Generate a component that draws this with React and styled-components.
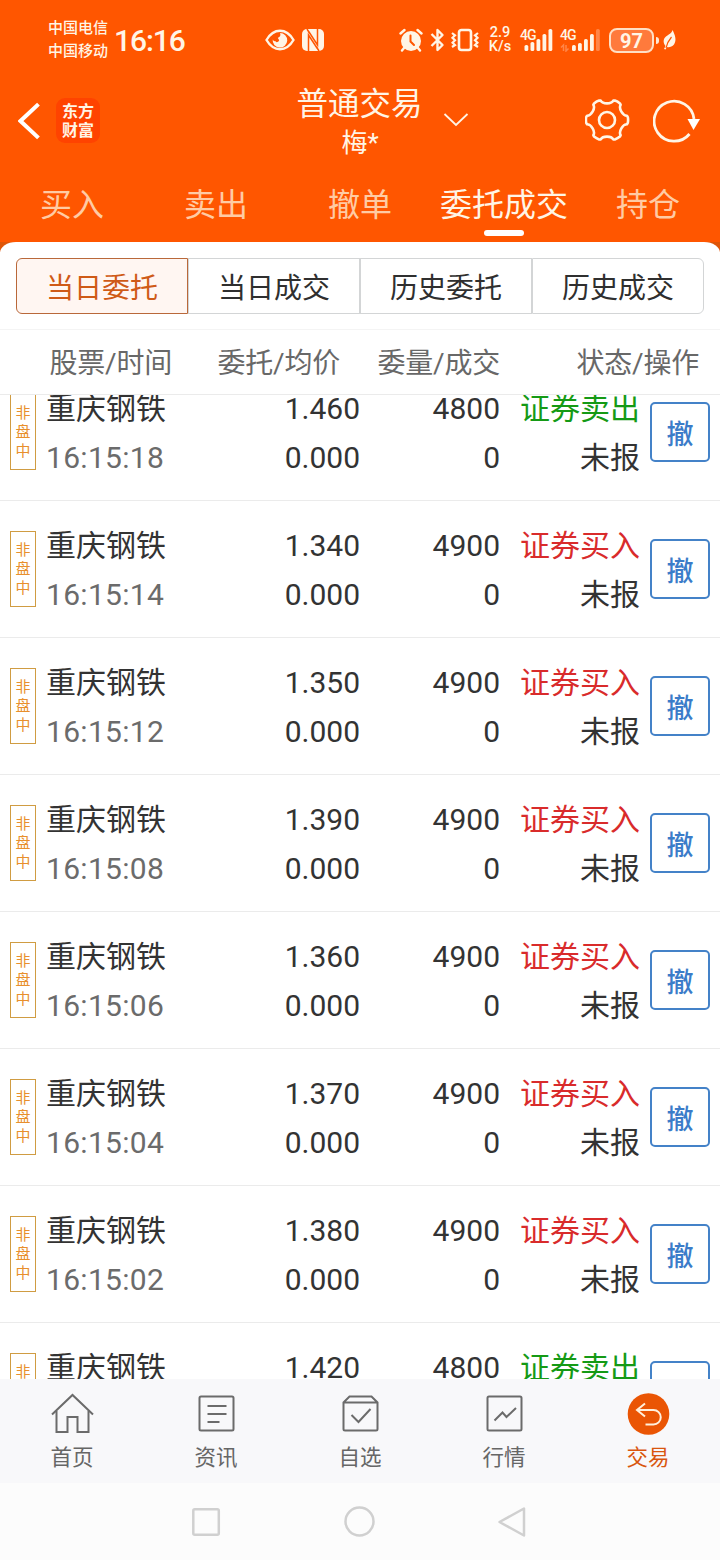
import styled, { createGlobalStyle } from 'styled-components';

const GlobalStyle = createGlobalStyle`
    * { box-sizing: border-box; }
    body {
        margin: 0;
        background: #fff;
        font-family: Roboto, "Noto Sans CJK SC", sans-serif;
        color: #333;
    }
`;

const Page = styled.div`
    width: 720px;
    height: 1560px;
    display: flex;
    flex-direction: column;
    overflow: hidden;
`;

// Header
const Header = styled.header`
    height: 242px;
    flex: none;
    background: #ff5600;
    color: #fff5e6;
    display: flex;
    flex-direction: column;
`;

const StatusBar = styled.div`
    height: 80px;
    display: flex;
    align-items: center;
    padding-left: 48px;

    svg { display: block; flex: none; }
`;

const Carriers = styled.div`
    width: 62px;
    font-size: 15px;
    font-weight: 500;
    line-height: 23px;
    white-space: nowrap;
`;

const Clock = styled.div`
    width: 151px;
    margin-left: 4px;
    font-size: 30px;
    font-weight: 500;
    line-height: 36px;
    letter-spacing: -1.1px;
    padding-top: 1px;
`;

const StatusItem = styled.div`
    flex: none;
    width: ${props => props.$width}px;
    margin-right: ${props => props.$gap || 0}px;
`;

const Speed = styled.div`
    width: 26px;
    margin-right: 7px;
    font-size: 14.5px;
    font-weight: 500;
    line-height: 14px;
    text-align: center;
    white-space: nowrap;
`;

const SignalBox = styled.div`
    position: relative;
    width: ${props => props.$width}px;
    height: 24px;
    margin-right: ${props => props.$gap}px;
`;

const Network = styled.span`
    position: absolute;
    left: 0;
    top: 0;
    font-size: 14px;
    font-weight: 500;
    line-height: 14px;
    letter-spacing: -1px;
`;

const Battery = styled.div`
    width: 45px;
    height: 25px;
    border: 2px solid #ffdfc4;
    border-radius: 8px;
    background: #ff7a3c;
    font-size: 20px;
    font-weight: 700;
    line-height: 22px;
    text-align: center;
`;

const BatteryTip = styled.div`
    width: 3px;
    height: 7px;
    margin: 0 4px 0 2px;
    border-radius: 0 3px 3px 0;
    background: #ffe9d6;
`;

const TitleBar = styled.div`
    height: 86px;
    display: flex;
    align-items: flex-start;

    svg { display: block; flex: none; }
`;

const BackButton = styled.div`
    width: 56px;
    padding: 22px 0 0 18px;
`;

const Logo = styled.div`
    width: 44px;
    height: 45px;
    margin: 18px 196px 0 0;
    padding-top: 3px;
    border-radius: 9px;
    background: #ff4300;
    font-family: "Noto Sans CJK SC", sans-serif;
    font-size: 16px;
    font-weight: 700;
    line-height: 19px;
    text-align: center;
`;

const Title = styled.div`
    width: 127px;
    text-align: center;
    white-space: nowrap;
`;

const TitleText = styled.div`
    font-size: 31.5px;
    line-height: 44px;
    margin-top: 3px;
`;

const Account = styled.div`
    padding-left: 1px;
    font-size: 26px;
    line-height: 32px;
`;

const Chevron = styled.div`
    width: 162px;
    padding: 32px 0 0 20px;
`;

const ToolButton = styled.div`
    width: ${props => props.$width}px;
    padding-top: 17px;
`;

const Tabs = styled.nav`
    display: grid;
    grid-template-columns: repeat(5, 1fr);
    height: 76px;
`;

const Tab = styled.div`
    display: flex;
    flex-direction: column;
    align-items: center;
    padding-top: 15px;
    font-size: 32px;
    line-height: 48px;
    white-space: nowrap;
    color: ${props => props.$active ? '#fff5e6' : '#ffcba4'};

    &::after {
        content: "";
        width: 40px;
        height: 6px;
        margin-top: 1px;
        border-radius: 3px;
        background: ${props => props.$active ? '#fff' : 'transparent'};
    }
`;

// Order list
const PanelBack = styled.div`
    flex: none;
    background: linear-gradient(#de5508 10px, #fff 10px);
`;

const Panel = styled.div`
    background: #fff;
    border-radius: 16px 16px 0 0 / 11px 11px 0 0;
`;

const Segments = styled.div`
    display: grid;
    grid-template-columns: repeat(4, 1fr);
    height: 88px;
    padding: 16px 16px;
    border-bottom: 1px solid #f4f4f4;
`;

const Segment = styled.div`
    height: 56px;
    border: 1px solid ${props => props.$active ? '#b9683a' : '#d3d5d6'};
    background: ${props => props.$active ? '#fff6f2' : '#fff'};
    color: ${props => props.$active ? '#cf5a17' : '#2f2f2f'};
    font-size: 28px;
    line-height: 54px;
    padding-top: 3px;
    text-align: center;

    &:first-child { border-radius: 6px 0 0 6px; }
    &:last-child { border-radius: 0 6px 6px 0; }
`;

const Columns = styled.div`
    display: grid;
    grid-template-columns: 172px 168px 160px 199px;
    height: 65px;
    padding-top: 3px;
    border-bottom: 1px solid #ebebeb;
    color: #686868;
    font-size: 28px;
    line-height: 62px;
    letter-spacing: -0.2px;
    text-align: right;
    white-space: nowrap;
`;

const List = styled.div`
    height: 984px;
    flex: none;
    overflow: hidden;
`;

const Row = styled.div`
    display: grid;
    grid-template-columns: 26px 194px 130px 140px 140px 70px;
    height: 137px;
    padding: 20px 10px 18px;
    border-bottom: 1px solid #ebebeb;
    font-size: 30px;
    line-height: 49px;

    &:first-child { margin-top: -31px; }
`;

const Tag = styled.div`
    display: flex;
    align-items: center;
    justify-content: center;
    height: 76px;
    margin-top: 10px;
    border: 1px solid #d09c42;
    color: #e88f2c;
    font-size: 15px;
    line-height: 19px;
    text-align: center;
`;

const TagText = styled.div`
    width: 15px;
    padding-top: 1px;
    word-break: break-all;
`;

const Cell = styled.div`
    padding-left: ${props => props.$left ? '10px' : 0};
    text-align: ${props => props.$left ? 'left' : 'right'};
    white-space: nowrap;
`;

const Time = styled.div`
    color: #6b6b6b;
    letter-spacing: 0.3px;
`;

const Side = styled.div`
    color: ${props => props.$sell ? '#159a15' : '#d92b2b'};
`;

const CancelButton = styled.div`
    width: 60px;
    height: 60px;
    margin: 18px 0 0 10px;
    padding-top: 3px;
    border: 2px solid #4482c8;
    border-radius: 5px;
    color: #3b7cc9;
    font-size: 27px;
    font-weight: 500;
    line-height: 56px;
    text-align: center;
`;

// Bottom bars
const BottomTabs = styled.nav`
    flex: none;
    display: grid;
    grid-template-columns: repeat(5, 1fr);
    height: 104px;
    background: #f8f8fa;
`;

const BottomTab = styled.div`
    display: flex;
    flex-direction: column;
    align-items: center;
    padding-top: 14px;
    color: ${props => props.$active ? '#d9560f' : '#666'};
    font-size: 21.5px;
    line-height: 32px;

    svg {
        display: block;
        margin-bottom: 6px;
    }
`;

const SystemNav = styled.div`
    flex: 1;
    display: flex;
    align-items: center;
    justify-content: center;
    gap: 122px;
    padding-right: 2px;
    background: #fcfcfc;
`;

const columns = ['股票/时间', '委托/均价', '委量/成交', '状态/操作'];

const orders = [
    { time: '16:15:18', price: '1.460', amount: 4800, sell: true },
    { time: '16:15:14', price: '1.340', amount: 4900 },
    { time: '16:15:12', price: '1.350', amount: 4900 },
    { time: '16:15:08', price: '1.390', amount: 4900 },
    { time: '16:15:06', price: '1.360', amount: 4900 },
    { time: '16:15:04', price: '1.370', amount: 4900 },
    { time: '16:15:02', price: '1.380', amount: 4900 },
    { time: '16:15:00', price: '1.420', amount: 4800, sell: true },
];

const polar = (radius, deg) => {
    const a = deg * Math.PI / 180;
    return `${(22 + radius * Math.cos(a)).toFixed(2)} ${(23 + radius * Math.sin(a)).toFixed(2)}`;
};

// six lobes with a scallop between each pair
const gearPath = [0, 60, 120, 180, 240, 300].map((d, i) =>
    `${i ? 'L' : 'M'}${polar(21, d - 8)}Q${polar(21.4, d)} ${polar(21, d + 8)}L${polar(20.4, d + 12)}C${polar(16.2, d + 15)} ${polar(16.2, d + 45)} ${polar(20.4, d + 48)}`
).join('') + 'Z';

const EyeIcon = () => (
    <svg width="30" height="22" viewBox="0 0 30 22" fill="none">
        <path d="M1.500 11C5 5 9.500 1.800 15 1.800S25 5 28.500 11C25 17 20.500 20.200 15 20.200S5 17 1.500 11Z" stroke="#fff5e6" strokeWidth="2.400" />
        <path d="M15 4A7.300 7.300 0 1 1 7.700 10.500C8.500 12 9.500 12.500 10.500 12C10.500 13.500 13 13.500 13.800 12C15 10.500 12.500 10 13 8.500C15 8.500 16 6 15 4Z" fill="#fff5e6" />
    </svg>
);

const NfcIcon = () => (
    <svg width="22" height="22" viewBox="0 0 22 22">
        <rect width="22" height="22" rx="5" fill="#fff5e6" />
        <path d="M6.500 23V6L15 19M15.500 -1V16L7 3" fill="none" stroke="#ff5600" strokeWidth="1.500" />
        <path d="M5 0L7.500 4M17 22L14.500 18" fill="none" stroke="#ff5600" strokeWidth="1.500" />
    </svg>
);

const AlarmIcon = () => (
    <svg width="24" height="24" viewBox="0 0 24 24" fill="none" stroke="#fff5e6" strokeLinecap="round">
        <circle cx="12" cy="13" r="10" fill="#fff5e6" stroke="none" />
        <path d="M1.500 5.500L5.500 2M22.500 5.500L18.500 2" strokeWidth="2.400" />
        <path d="M5 20L3 22.500M19 20L21 22.500" strokeWidth="2.400" />
        <path d="M11.500 7.500V13.500L15 17" stroke="#ff5600" strokeWidth="2" />
    </svg>
);

const BluetoothIcon = () => (
    <svg width="15" height="24" viewBox="0 0 15 24" fill="none" stroke="#fff5e6" strokeWidth="2.400" strokeLinejoin="round">
        <path d="M1.500 6L12.500 17L7.500 22V2L12.500 7L1.500 18" />
    </svg>
);

const VibrateIcon = () => (
    <svg width="28" height="24" viewBox="0 0 28 24" fill="none" stroke="#fff5e6">
        <rect x="8" y="2" width="12" height="20" rx="2.500" strokeWidth="2.600" />
        <path d="M1 5L4 7.300L1.500 9.800L4 12.200L1.500 14.700L4 17L1 19M27 5L24 7.300L26.500 9.800L24 12.200L26.500 14.700L24 17L27 19" strokeWidth="2.200" />
    </svg>
);

const Signal = ({ left, width, gap, weak }) => (
    <SignalBox $width={width} $gap={gap}>
        <svg width={width} height="24" viewBox={`0 0 ${width} 24`} fill="#fff5e6">
            {(weak ? [6, 8, 12, 17, 22] : [6, 9, 12, 17, 22]).map((h, i) => (
                <rect key={h} x={left + i * 6} y={23 - h} width="3.800" height={h} rx="1.600" fill={weak && i === 4 ? '#ff8648' : '#fff5e6'} />
            ))}
            {weak && <path d="M1 19.500L3.500 17V23M6 17V23L8.500 20.500" stroke="#ff8648" strokeWidth="1.500" fill="none" />}
        </svg>
        <Network>4G</Network>
    </SignalBox>
);

const LeafIcon = () => (
    <svg width="14" height="20" viewBox="0 0 14 20">
        <path d="M9.500 0C12 5 14 10 11 14.500C9 17 6 17.500 4 17L2.500 19.500L1 19L2.500 16C0 13 0 9 3 6.500C6 4 8.500 3.500 9.500 0Z" fill="#fff5e6" />
        <path d="M3 18C4 13 6 10 8.500 7" stroke="#ff5600" strokeWidth="1.200" fill="none" />
    </svg>
);

const HomeIcon = () => (
    <>
        <path d="M1 21.500L21.500 2L42 21.500" />
        <path d="M5.500 18V39H16.500V24H26.500V39H37.500V18" />
    </>
);

const NewsIcon = () => (
    <>
        <rect x="4.500" y="3.500" width="34" height="34" rx="1.500" />
        <path d="M12.500 13H31.500M12.500 21H31.500M12.500 29H24.500" />
    </>
);

const WatchIcon = () => (
    <>
        <path d="M4.500 9.500L10.500 3.500H32.500L38.500 9.500V36Q38.500 37.500 37 37.500H6Q4.500 37.500 4.500 36ZM4.500 9.500H38.500" />
        <path d="M12.500 22L19.500 29L31.500 16" />
    </>
);

const QuoteIcon = () => (
    <>
        <rect x="4.500" y="3.500" width="34" height="34" rx="1.500" />
        <path d="M11.500 27.500L19.500 19.500L23.500 24L33 15" />
    </>
);

const TradeIcon = () => (
    <>
        <circle cx="21.500" cy="21" r="20.800" fill="#ea5504" stroke="none" />
        <path d="M18 10.500L10 17L18 23.500M10 17H26.500A7 7 0 0 1 26.500 31.500H18.500" stroke="#fff0dc" />
    </>
);

const bottomTabs = [
    { label: '首页', Icon: HomeIcon },
    { label: '资讯', Icon: NewsIcon },
    { label: '自选', Icon: WatchIcon },
    { label: '行情', Icon: QuoteIcon },
    { label: '交易', Icon: TradeIcon, active: true },
];

const App = () => {
    const renderOrders = () => {
        return orders.map(order => (
            <Row key={order.time}>
                <Tag><TagText>非盘中</TagText></Tag>
                <Cell $left>
                    <div>重庆钢铁</div>
                    <Time>{order.time}</Time>
                </Cell>
                <Cell>
                    <div>{order.price}</div>
                    <div>0.000</div>
                </Cell>
                <Cell>
                    <div>{order.amount}</div>
                    <div>0</div>
                </Cell>
                <Cell>
                    <Side $sell={order.sell}>{order.sell ? '证券卖出' : '证券买入'}</Side>
                    <div>未报</div>
                </Cell>
                <CancelButton>撤</CancelButton>
            </Row>
        ));
    }

    return (
        <Page>
            <GlobalStyle />
            <Header>
                <StatusBar>
                    <Carriers>
                        <div>中国电信</div>
                        <div>中国移动</div>
                    </Carriers>
                    <Clock>16:16</Clock>
                    <StatusItem $width={30} $gap={7}><EyeIcon /></StatusItem>
                    <StatusItem $width={22} $gap={75}><NfcIcon /></StatusItem>
                    <StatusItem $width={24} $gap={7}><AlarmIcon /></StatusItem>
                    <StatusItem $width={15} $gap={6}><BluetoothIcon /></StatusItem>
                    <StatusItem $width={28} $gap={8}><VibrateIcon /></StatusItem>
                    <Speed>2.9<br />K/s</Speed>
                    <Signal left={4.5} width={33} gap={7} />
                    <Signal left={12} width={41} gap={8} weak />
                    <Battery>97</Battery>
                    <BatteryTip />
                    <LeafIcon />
                </StatusBar>
                <TitleBar>
                    <BackButton>
                        <svg width="24" height="38" viewBox="0 0 24 38" fill="none">
                            <path d="M19 3.500L2.500 19L19 34.500" stroke="#fff" strokeWidth="4" strokeLinecap="square" />
                        </svg>
                    </BackButton>
                    <Logo>东方<br />财富</Logo>
                    <Title>
                        <TitleText>普通交易</TitleText>
                        <Account>梅*</Account>
                    </Title>
                    <Chevron>
                        <svg width="26" height="15" viewBox="0 0 26 15" fill="none">
                            <path d="M1.500 2L13 13L24.500 2" stroke="#fff5e6" strokeWidth="1.800" />
                        </svg>
                    </Chevron>
                    <ToolButton $width={68}>
                        <svg width="46" height="46" viewBox="0 0 46 46" fill="none" stroke="#fff5e6" strokeWidth="2.600" strokeLinejoin="round">
                            <path d={gearPath} />
                            <circle cx="22" cy="23" r="8" />
                        </svg>
                    </ToolButton>
                    <ToolButton $width={50}>
                        <svg width="50" height="46" viewBox="0 0 50 46" fill="none">
                            <path d="M41 22A20 20 0 1 0 36.500 37" stroke="#fff5e6" strokeWidth="2.800" />
                            <path d="M34.500 22H47L40.500 33Z" fill="#fff" />
                        </svg>
                    </ToolButton>
                </TitleBar>
                <Tabs>
                    <Tab>买入</Tab>
                    <Tab>卖出</Tab>
                    <Tab>撤单</Tab>
                    <Tab $active>委托成交</Tab>
                    <Tab>持仓</Tab>
                </Tabs>
            </Header>
            <PanelBack>
                <Panel>
                    <Segments>
                        <Segment $active>当日委托</Segment>
                        <Segment>当日成交</Segment>
                        <Segment>历史委托</Segment>
                        <Segment>历史成交</Segment>
                    </Segments>
                    <Columns>
                        {columns.map(name => <div key={name}>{name}</div>)}
                    </Columns>
                </Panel>
            </PanelBack>
            <List>{renderOrders()}</List>
            <BottomTabs>
                {bottomTabs.map(({ label, Icon, active }) => (
                    <BottomTab key={label} $active={active}>
                        <svg width="43" height="43" viewBox="0 0 43 43" fill="none" stroke="#6b6b6b" strokeWidth="2">
                            <Icon />
                        </svg>
                        {label}
                    </BottomTab>
                ))}
            </BottomTabs>
            <SystemNav>
                <svg width="30" height="30" viewBox="0 0 30 30" fill="none" stroke="#d0d0d0" strokeWidth="2.500">
                    <rect x="2.300" y="2.300" width="25.500" height="25.500" rx="1.500" />
                </svg>
                <svg width="32" height="32" viewBox="0 0 32 32" fill="none" stroke="#d0d0d0" strokeWidth="2.500">
                    <circle cx="16.500" cy="15.500" r="14" />
                </svg>
                <svg width="30" height="32" viewBox="0 0 30 32" fill="none" stroke="#d0d0d0" strokeWidth="2.500" strokeLinejoin="round">
                    <path d="M27 2.500V29.500L2.500 16Z" />
                </svg>
            </SystemNav>
        </Page>
    );
}

export default App;
